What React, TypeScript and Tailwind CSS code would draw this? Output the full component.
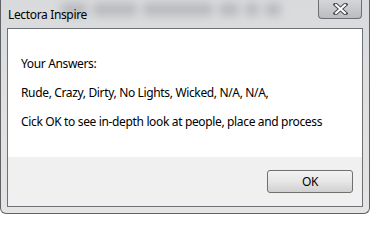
const glassBlobs = [
  { l: "left-[60px]", w: "w-[26px]" },
  { l: "left-[92px]", w: "w-[44px]" },
  { l: "left-[142px]", w: "w-[70px]" },
  { l: "left-[218px]", w: "w-[20px]" },
  { l: "left-[244px]", w: "w-[14px]" },
  { l: "left-[264px]", w: "w-[16px]" },
];

export default function App() {
  const font = { fontFamily: '"Segoe UI", "Noto Sans", sans-serif' };
  return (
    <div
      className="relative w-[370px] h-[214px] overflow-hidden rounded-b-[6px] border border-t-0 border-[#5f6266] bg-gradient-to-b from-[#d9dadc] via-[#e0e0e0] to-[#e4e4e4] flex flex-col text-[12px] tracking-[-0.35px] text-black"
      style={font}
    >
      {/* Blurred glass: shapes of the window behind */}
      {glassBlobs.map((b, i) => (
        <div
          key={i}
          aria-hidden
          className={`absolute top-[3px] h-[13px] ${b.l} ${b.w} rounded-[4px] bg-[#a3a6aa] blur-[4px] opacity-60`}
        />
      ))}

      {/* Title bar */}
      <div className="relative h-[28px] flex items-start shrink-0">
        <span className="pl-[7px] pt-[7px] leading-[16px]">Lectora Inspire</span>
        <button className="ml-auto mr-[7px] w-[44px] h-[19px] rounded-b-[4px] border border-t-0 border-[#6b6e72] bg-gradient-to-b from-[#d4d6d9] to-[#b9bcc0] flex items-center justify-center">
          <svg width="15" height="12" viewBox="0 0 15 12">
            <path
              d="M2.5 1.5 L12.5 10.5 M12.5 1.5 L2.5 10.5"
              stroke="#4a4d52"
              strokeWidth="4"
              strokeLinecap="square"
            />
            <path
              d="M3 2 L12 10 M12 2 L3 10"
              stroke="#ffffff"
              strokeWidth="2"
              strokeLinecap="square"
            />
          </svg>
        </button>
      </div>

      {/* Client area */}
      <div className="mx-[6px] mb-[6px] flex-1 flex flex-col border border-[#6d7074] bg-white">
        <div className="h-[128px] px-[13px] pt-[27px] flex flex-col gap-[13px] leading-[16px]">
          <p>Your Answers:</p>
          <p>Rude, Crazy, Dirty, No Lights, Wicked, N/A, N/A,</p>
          <p>Cick OK to see in-depth look at people, place and process</p>
        </div>
        <div className="flex-1 bg-[#f0f0f0] flex justify-end items-start pt-[13px] pr-[9px]">
          <button className="w-[86px] h-[23px] rounded-[3px] border border-[#707070] bg-gradient-to-b from-[#f2f2f2] via-[#e6e6e6] to-[#d0d0d0] leading-none">
            OK
          </button>
        </div>
      </div>
    </div>
  );
}
